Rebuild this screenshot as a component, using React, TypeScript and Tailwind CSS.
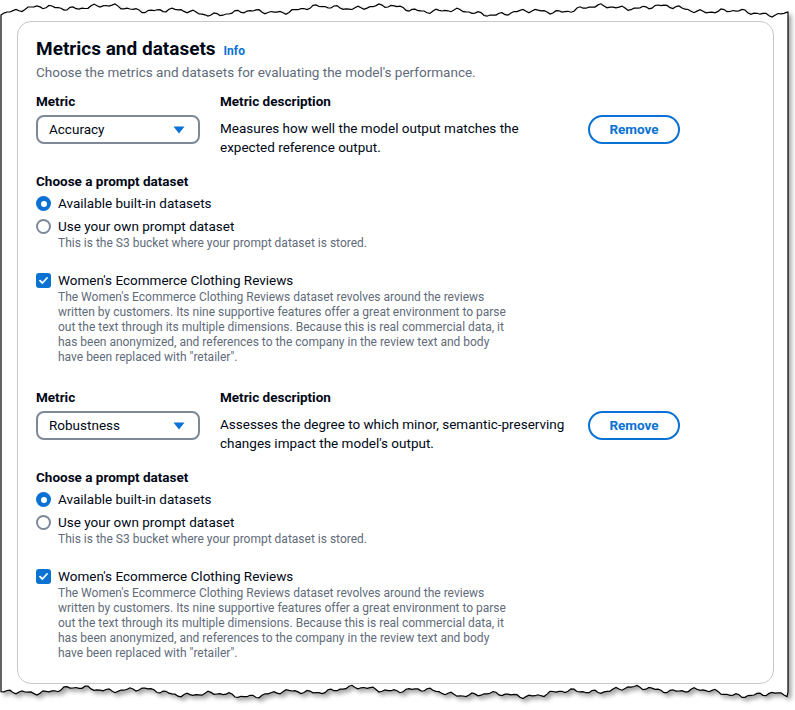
import React from "react"

const W = 795
const H = 710

function edge(x0: number, x1: number, base: number, seed: number, amp: number) {
  const pts: string[] = []
  for (let x = x0; x <= x1; x += 3) {
    const n =
      Math.sin(x * 0.09 + seed) * 0.45 +
      Math.sin(x * 0.023 + seed * 2.1) * 0.8 +
      Math.sin(x * 0.31 + seed * 0.7) * 0.3 +
      Math.sin(x * 0.57 + seed * 1.3) * 0.25
    pts.push(`${x},${(base + n * amp).toFixed(1)}`)
  }
  return pts
}

function TornPaper() {
  const top = edge(1, 787, 10, 1.3, 4)
  const bottom = edge(1, 787, 692, 4.2, 4).reverse()
  const d = `M1,${top[0].split(",")[1]} L${top.join(" L")} L788,${top[top.length - 1].split(",")[1]} L788,692 L${bottom.join(" L")} Z`
  return (
    <svg className="absolute inset-0" width={W} height={H}>
      <defs>
        <filter id="sh" x="-5%" y="-5%" width="110%" height="110%">
          <feDropShadow dx="3" dy="3" stdDeviation="2" floodColor="#000" floodOpacity="0.35" />
        </filter>
      </defs>
      <path d={d} fill="#fff" stroke="#000" strokeWidth="1.2" filter="url(#sh)" />
    </svg>
  )
}

function Radio({ checked, label }: { checked?: boolean; label: string }) {
  return (
    <div className="flex items-center gap-[7px] h-[23px]">
      {checked ? (
        <span className="w-[15px] h-[15px] rounded-full bg-[#0972d3] flex items-center justify-center">
          <span className="w-[6px] h-[6px] rounded-full bg-white" />
        </span>
      ) : (
        <span className="w-[15px] h-[15px] rounded-full border-2 border-[#7d8998] bg-white" />
      )}
      <span className="text-[13.5px] text-[#000716]">{label}</span>
    </div>
  )
}

function MetricBlock({ name, desc }: { name: string; desc: React.ReactNode }) {
  return (
    <div>
      <div className="flex items-start">
        <div className="w-[164px]">
          <div className="text-[13.5px] font-bold text-[#000716] leading-[18px]">Metric</div>
          <div className="mt-[5px] h-[29px] border-2 border-[#7d8998] rounded-[8px] flex items-center justify-between pl-[11px] pr-[13px]">
            <span className="text-[13.5px] text-[#000716]">{name}</span>
            <svg width="12" height="8" viewBox="0 0 12 8">
              <path d="M0.5 0.5 L11.5 0.5 L6 7.5 Z" fill="#0972d3" />
            </svg>
          </div>
        </div>
        <div className="ml-[20px] w-[350px]">
          <div className="text-[13.5px] font-bold text-[#000716] leading-[18px]">Metric description</div>
          <div className="mt-[9px] text-[13.5px] text-[#000716] leading-[19px] whitespace-nowrap">{desc}</div>
        </div>
        <button className="ml-[18px] mt-[23px] w-[92px] h-[29px] rounded-full border-2 border-[#0972d3] text-[#0972d3] text-[13.5px] font-bold flex items-center justify-center">
          Remove
        </button>
      </div>

      <div className="mt-[15px] text-[13.5px] font-bold text-[#000716] leading-[18px]">Choose a prompt dataset</div>
      <div className="mt-[2px]">
        <Radio checked label="Available built-in datasets" />
        <Radio label="Use your own prompt dataset" />
        <div className="pl-[22px] -mt-[2px] text-[12px] text-[#5f6b7a] leading-[15px]">
          This is the S3 bucket where your prompt dataset is stored.
        </div>
      </div>

      <div className="mt-[19px] flex items-center gap-[7px] h-[20px]">
        <span className="w-[15px] h-[15px] rounded-[3px] bg-[#0972d3] flex items-center justify-center">
          <svg width="11" height="11" viewBox="0 0 11 11">
            <path d="M2 5.6 L4.4 8 L9 3" fill="none" stroke="#fff" strokeWidth="1.8" strokeLinecap="round" strokeLinejoin="round" />
          </svg>
        </span>
        <span className="text-[13.5px] text-[#000716]">Women's Ecommerce Clothing Reviews</span>
      </div>
      <div className="pl-[22px] text-[12px] text-[#5f6b7a] leading-[15px] whitespace-nowrap">
        The Women's Ecommerce Clothing Reviews dataset revolves around the reviews
        <br />
        written by customers. Its nine supportive features offer a great environment to parse
        <br />
        out the text through its multiple dimensions. Because this is real commercial data, it
        <br />
        has been anonymized, and references to the company in the review text and body
        <br />
        have been replaced with "retailer".
      </div>
    </div>
  )
}

export default function App() {
  return (
    <div
      className="relative w-[795px] h-[710px] bg-white overflow-hidden"
      style={{ fontFamily: "Roboto, 'Open Sans', sans-serif" }}
    >
      <TornPaper />
      <div className="relative ml-[17px] mt-[21px] w-[757px] h-[663px] border border-[#c6c6cd] rounded-[14px] px-[18px] pt-[15px]">
        <div className="flex items-baseline gap-[8px]">
          <h2 className="text-[19px] font-bold text-[#000716] leading-[24px]">Metrics and datasets</h2>
          <span className="text-[12px] font-bold text-[#0972d3]">Info</span>
        </div>
        <p className="mt-[2px] text-[13.5px] text-[#5f6b7a] leading-[19px]">
          Choose the metrics and datasets for evaluating the model's performance.
        </p>

        <div className="mt-[10px]">
          <MetricBlock
            name="Accuracy"
            desc={
              <>
                Measures how well the model output matches the
                <br />
                expected reference output.
              </>
            }
          />
        </div>
        <div className="mt-[23px]">
          <MetricBlock
            name="Robustness"
            desc={
              <>
                Assesses the degree to which minor, semantic-preserving
                <br />
                changes impact the model's output.
              </>
            }
          />
        </div>
      </div>
    </div>
  )
}
